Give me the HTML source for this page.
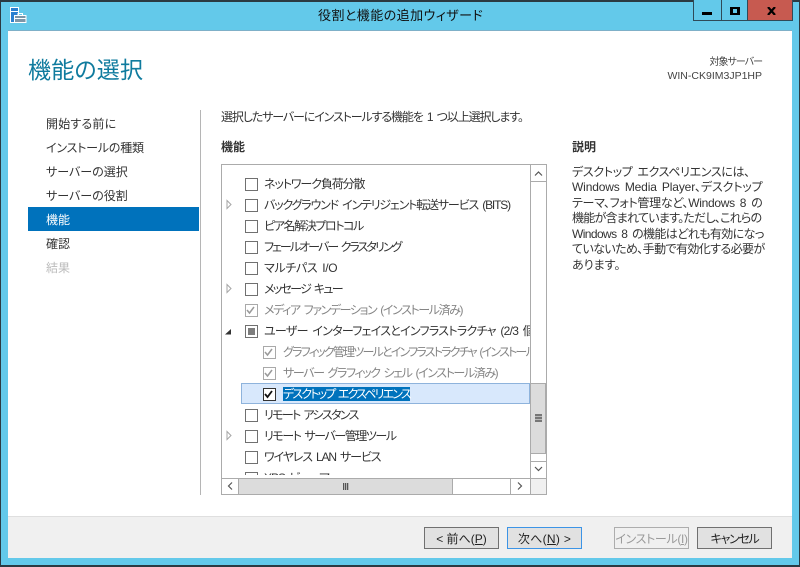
<!DOCTYPE html>
<html lang="ja"><head><meta charset="utf-8"><style>
html,body{margin:0;padding:0;width:800px;height:567px;overflow:hidden;background:#63c9ea}
body{position:relative;font-family:"Liberation Sans","Noto Sans CJK JP",sans-serif;font-size:12px;color:#333;font-feature-settings:"palt"}
div,span,svg{position:absolute}
.t{white-space:nowrap;line-height:16px;height:16px;word-spacing:2px}
.g{color:#858585}
.cb{width:11px;height:11px;border:1px solid #707070;background:#fff}
.cd{border-color:#a9a9a9}
.btn{width:73px;height:20px;top:527px;border:1px solid #707070;background:#e1e1e1;text-align:center;line-height:22px;color:#222;font-size:12px;white-space:nowrap}
u{text-decoration:underline}
</style></head><body>
<div style="left:0;top:0;width:800px;height:567px;box-sizing:border-box;border:1px solid #2b3a42;border-top-width:2px;border-bottom-width:2px"></div>
<svg style="left:10px;top:7px" width="17" height="17" viewBox="0 0 17 17"><path d="M.5.500h8v15h-8z" fill="#2a80d0" stroke="#fff"/><path d="M1 4.500h7" stroke="#fff"/><rect x="4.500" y="8.500" width="11.500" height="7" fill="#7d96a8" stroke="#fff"/><path d="M8 8.500V6.500h4.500v2M4.500 11.500h11.500" fill="none" stroke="#fff"/></svg>
<div class="t" style="left:318px;top:8px;font-size:13px;color:#111;letter-spacing:.45px">役割と機能の追加ウィザード</div>

<div style="left:693px;top:0;width:100px;height:21px;box-sizing:border-box;border:1px solid #2f4a58;border-top:0;background:#63c9ea"></div>
<div style="left:721px;top:0;width:1px;height:21px;background:#2f4a58"></div>
<div style="left:747px;top:0;width:46px;height:21px;box-sizing:border-box;border:1px solid #2f4a58;border-top:0;background:#c75a50"></div>
<div style="left:702px;top:12px;width:10px;height:3px;background:#000"></div>
<div style="left:730px;top:7px;width:4px;height:4px;border:2px solid #000;border-width:2px 3px"></div>
<svg style="left:767px;top:7px" width="9" height="8" viewBox="0 0 9 8"><path d="M1 0l7 8M8 0L1 8" stroke="#000" stroke-width="2.200" fill="none"/></svg>

<div style="left:8px;top:30px;width:784px;height:1px;background:#7fb0c8"></div>
<div style="left:8px;top:31px;width:784px;height:485px;background:#fff"></div>
<div style="left:8px;top:516px;width:784px;height:1px;background:#dfdfdf"></div>
<div style="left:8px;top:517px;width:784px;height:41px;background:#f0f0f0"></div>

<div class="t" style="left:28px;top:54px;height:32px;line-height:32px;font-size:23px;color:#0f7b9e;letter-spacing:.2px">機能の選択</div>
<div class="t" style="right:38px;top:55px;font-size:10px;color:#444;letter-spacing:-1px">対象サーバー</div>
<div class="t" style="right:38px;top:68px;font-size:10.500px;color:#444">WIN-CK9IM3JP1HP</div>

<div style="left:28px;top:207px;width:171px;height:24px;background:#0072bc"></div>
<div class="t" style="left:46px;top:116px;letter-spacing:.2px">開始する前に</div>
<div class="t" style="left:46px;top:140px;letter-spacing:-.2px">インストールの種類</div>
<div class="t" style="left:46px;top:164px">サーバーの選択</div>
<div class="t" style="left:46px;top:188px">サーバーの役割</div>
<div class="t" style="left:46px;top:212px;color:#fff">機能</div>
<div class="t" style="left:46px;top:236px">確認</div>
<div class="t" style="left:46px;top:260px;color:#bbb">結果</div>
<div style="left:200px;top:110px;width:1px;height:385px;background:#b5b5b5"></div>

<div class="t" style="left:221px;top:109px;letter-spacing:-1.120px">選択したサーバーにインストールする機能を 1 つ以上選択します。</div>
<div class="t" style="left:221px;top:139px;font-weight:bold">機能</div>
<div class="t" style="left:572px;top:139px;font-weight:bold">説明</div>
<div class="t" style="left:572px;top:164px;letter-spacing:-.35px">デスクトップ エクスペリエンスには、</div>
<div class="t" style="left:572px;top:179px;letter-spacing:-.15px">Windows Media Player、デスクトップ</div>
<div class="t" style="left:572px;top:195px;letter-spacing:-.3px">テーマ、フォト管理など、Windows 8 の</div>
<div class="t" style="left:572px;top:210px;letter-spacing:-.75px">機能が含まれています。ただし、これらの</div>
<div class="t" style="left:572px;top:226px;letter-spacing:-.6px">Windows 8 の機能はどれも有効になっ</div>
<div class="t" style="left:572px;top:241px;letter-spacing:-.6px">ていないため、手動で有効化する必要が</div>
<div class="t" style="left:572px;top:257px">あります。</div>

<!-- list -->
<div style="left:221px;top:164px;width:326px;height:331px;box-sizing:border-box;border:1px solid #ababab;background:#fff;overflow:hidden">
 <div style="left:19px;top:218px;width:287px;height:19px;background:#d8e8fc;border:1px solid #8eb3dc"></div>
 <div style="left:61px;top:222px;width:127px;height:14px;background:#0072bc"></div>

 <div class="cb" style="left:23px;top:13px"></div><div class="t" style="left:42px;top:11px;letter-spacing:-1.100px">ネットワーク負荷分散</div>
 <div class="cb" style="left:23px;top:34px"></div><div class="t" style="left:42px;top:32px;letter-spacing:-1.170px">バックグラウンド インテリジェント転送サービス (BITS)</div>
 <div class="cb" style="left:23px;top:55px"></div><div class="t" style="left:42px;top:53px;letter-spacing:-1.400px">ピア名解決プロトコル</div>
 <div class="cb" style="left:23px;top:76px"></div><div class="t" style="left:42px;top:74px;letter-spacing:-1.950px">フェールオーバー クラスタリング</div>
 <div class="cb" style="left:23px;top:97px"></div><div class="t" style="left:42px;top:95px;letter-spacing:-.35px">マルチパス I/O</div>
 <div class="cb" style="left:23px;top:118px"></div><div class="t" style="left:42px;top:116px;letter-spacing:-1.700px">メッセージ キュー</div>
 <div class="cb cd" style="left:23px;top:139px"></div><div class="t g" style="left:42px;top:137px;letter-spacing:-1.400px">メディア ファンデーション (インストール済み)</div>
 <div class="cb" style="left:23px;top:160px"></div><div style="left:26px;top:163px;width:7px;height:7px;background:#7d7d7d"></div><div class="t" style="left:42px;top:158px;width:266px;overflow:hidden;letter-spacing:-.72px">ユーザー インターフェイスとインフラストラクチャ (2/3 個をインストール済み)</div>
 <div class="cb cd" style="left:41px;top:181px"></div><div class="t g" style="left:61px;top:179px;width:247px;overflow:hidden;letter-spacing:-1.780px">グラフィック管理ツールとインフラストラクチャ (インストール済み)</div>
 <div class="cb cd" style="left:41px;top:202px"></div><div class="t g" style="left:61px;top:200px;letter-spacing:-1.400px">サーバー グラフィック シェル (インストール済み)</div>
 <div class="cb" style="left:41px;top:223px;border-color:#333"></div><div class="t" style="left:61px;top:221px;color:#fff;letter-spacing:-1.850px">デスクトップ エクスペリエンス</div>
 <div class="cb" style="left:23px;top:244px"></div><div class="t" style="left:42px;top:242px;letter-spacing:-1.650px">リモート アシスタンス</div>
 <div class="cb" style="left:23px;top:265px"></div><div class="t" style="left:42px;top:263px;letter-spacing:-1.450px">リモート サーバー管理ツール</div>
 <div class="cb" style="left:23px;top:286px"></div><div class="t" style="left:42px;top:284px;letter-spacing:-1.150px">ワイヤレス LAN サービス</div>
 <div class="cb" style="left:23px;top:307px"></div><div class="t" style="left:42px;top:305px;letter-spacing:-1px">XPS ビューアー</div>
 <div style="left:0;top:310px;width:308px;height:4px;background:#fff"></div>

 <svg style="left:0;top:0" width="320" height="312" viewBox="0 0 320 312" fill="none">
  <path d="M5 35.500l4 4-4 4zM5 119.500l4 4-4 4zM5 266.500l4 4-4 4z" stroke="#a6a6a6"/>
  <path d="M9 164v5.500H3z" fill="#333"/>
  <path d="M25 145l2.500 3 4.500-6M43 187l2.500 3 4.500-6M43 208l2.500 3 4.500-6" stroke="#9a9a9a" stroke-width="1.500"/>
  <path d="M43 229l2.500 3 4.500-6" stroke="#111" stroke-width="1.800"/>
 </svg>

 <!-- scrollbars -->
 <div style="left:308px;top:0;width:16px;height:313px;background:#fff;border-left:1px solid #ababab"></div>
 <div style="left:309px;top:16px;width:15px;height:1px;background:#ababab"></div>
 <div style="left:309px;top:296px;width:15px;height:1px;background:#ababab"></div>
 <div style="left:308px;top:218px;width:14px;height:69px;background:#dcdcdc;border:1px solid #ababab"></div>
 <div style="left:313px;top:249px;width:7px;height:8px;background:repeating-linear-gradient(#777 0 2px,#bbb 2px 3px)"></div>
 <svg style="left:309px;top:0" width="15" height="312" viewBox="0 0 15 312" fill="none"><path d="M4 10.500l3.500-3.500 3.500 3.500M4 302l3.500 3.500 3.500-3.500" stroke="#555" stroke-width="1.200"/></svg>

 <div style="left:0;top:313px;width:308px;background:#fff;border-top:1px solid #ababab;box-sizing:border-box;height:16px"></div>
 <div style="left:16px;top:313px;width:1px;height:16px;background:#ababab"></div>
 <div style="left:288px;top:313px;width:1px;height:16px;background:#ababab"></div>
 <div style="left:17px;top:313px;width:213px;height:15px;background:#dcdcdc;border-top:1px solid #ababab;border-right:1px solid #ababab"></div>
 <div style="left:121px;top:318px;width:6px;height:7px;background:repeating-linear-gradient(90deg,#555 0 1px,#b5b5b5 1px 2px)"></div>
 <div style="left:308px;top:313px;width:16px;height:16px;background:#f0f0f0;border-top:1px solid #ababab;border-left:1px solid #ababab;box-sizing:border-box"></div>
 <svg style="left:0;top:313px" width="308" height="16" viewBox="0 0 308 16" fill="none"><path d="M10 4.500l-3.500 3.500L10 11.500M296 4.500l3.500 3.500L296 11.500" stroke="#555" stroke-width="1.200"/></svg>
</div>

<div class="btn" style="left:424px">&lt; 前へ(<u>P</u>)</div>
<div class="btn" style="left:507px;border-color:#3c94e6;letter-spacing:.3px">次へ(<u>N</u>) &gt;</div>
<div class="btn" style="left:614px;border-color:#adadad;background:#f0f0f0;color:#9a9a9a;letter-spacing:-.35px">インストール(<u>I</u>)</div>
<div class="btn" style="left:697px;letter-spacing:-1.300px">キャンセル</div>
</body></html>
